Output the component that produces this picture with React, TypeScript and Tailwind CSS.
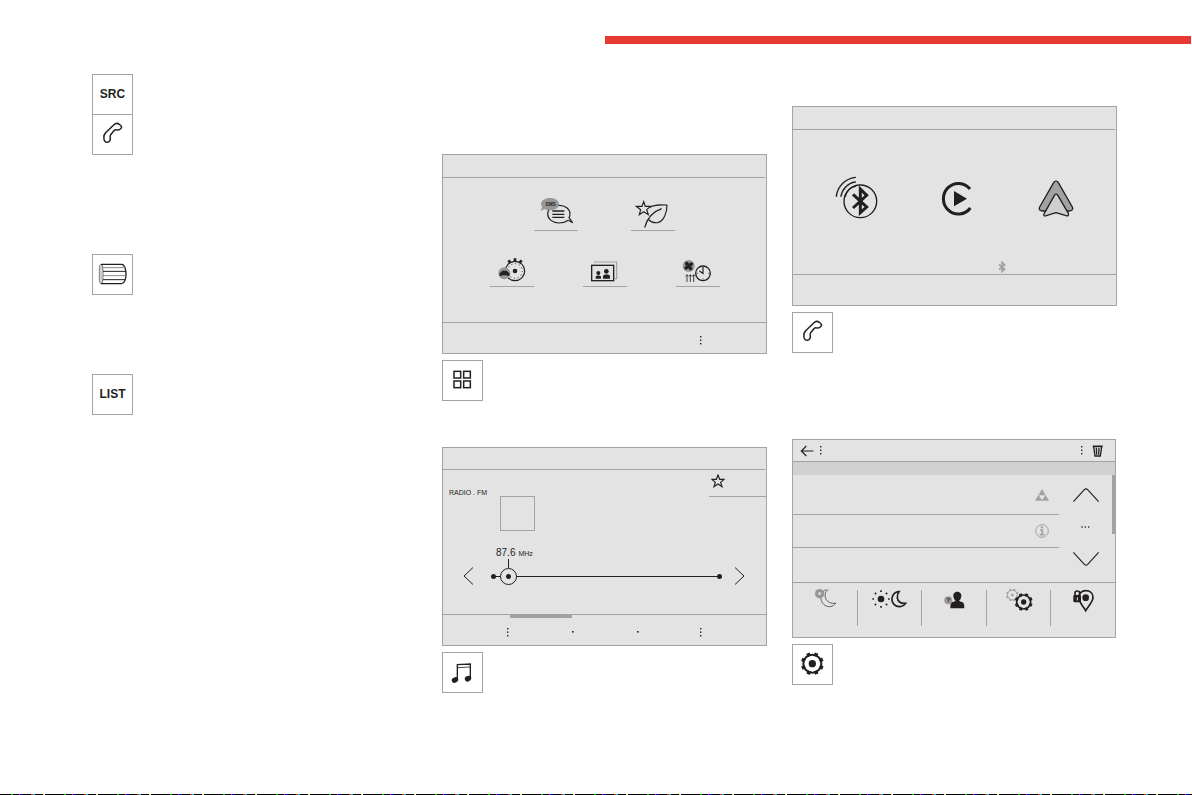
import React, { useState } from 'react';

const INK = '#231f20';
const GREY = '#a3a1a1';

function Gear({ cx, cy, r, tooth, color = INK, stroke = 5, dot = 8 }: {
  cx: number; cy: number; r: number; tooth: number; color?: string; stroke?: number; dot?: number;
}) {
  return (
    <g>
      <circle cx={cx} cy={cy} r={r} fill="none" stroke={color} strokeWidth={stroke} />
      {[22, 67, 112, 157, 202, 247, 292, 337].map(a => (
        <rect
          key={a}
          x={cx - tooth / 2}
          y={cy - r - tooth * 0.65}
          width={tooth}
          height={tooth}
          fill={color}
          stroke="none"
          transform={`rotate(${a} ${cx} ${cy})`}
        />
      ))}
      <circle cx={cx} cy={cy} r={dot} fill={color} stroke="none" />
    </g>
  );
}

function Tile({ label, children }: { label: string; children: React.ReactNode }) {
  return (
    <button
      type="button"
      aria-label={label}
      className="flex size-[41px] shrink-0 items-center justify-center border border-[#a3a3a3] bg-white"
    >
      {children}
    </button>
  );
}

function PhoneIcon() {
  return (
    <svg viewBox="0 0 117 117" className="size-[39px]" fill="none" stroke={INK} strokeWidth="4.5" strokeLinejoin="round">
      <path d="M33 66C31 63 34 58 38 53L62 30C67 25 74 24 79 28C86 32 87 37 84 40C81 44 76 46 71 45C68 43 65 45 62 48L53 59C50 63 51 65 52 69C53 75 49 82 43 82C36 82 31 75 33 66Z" />
    </svg>
  );
}

function KnobIcon() {
  return (
    <svg viewBox="0 0 117 117" className="size-[39px]" fill="none" stroke={INK} strokeWidth="3">
      <path d="M20 32L27 29V85L20 82Z" fill="#d0d0d0" stroke="none" />
      <path d="M24 28H86C94 28 99 42 99 57C99 73 94 86 86 86H24" strokeWidth="4" />
      <path d="M24 28C19 29 19 34 19 57C19 80 19 85 24 86" stroke="#777" />
      <path d="M27 29C31 38 31 76 27 85" strokeWidth="2" />
      <path d="M30 38H96M30 62H98" stroke="#8a8a8a" />
      <path d="M30 49H98M30 74H96" />
    </svg>
  );
}

function AppsIcon() {
  return (
    <svg viewBox="0 0 117 117" className="size-[39px]" fill="none" stroke={INK} strokeWidth="4.5">
      <rect x="33" y="31" width="20" height="20" />
      <rect x="62" y="31" width="20" height="20" />
      <rect x="33" y="60" width="20" height="20" />
      <rect x="62" y="60" width="20" height="20" />
    </svg>
  );
}

function MusicIcon() {
  return (
    <svg viewBox="0 0 117 117" className="size-[39px]" fill="none" stroke={INK} strokeWidth="4">
      <path d="M43 81V35L82 33V76" />
      <path d="M43 44L82 42" strokeWidth="2.5" />
      <ellipse cx="36" cy="81" rx="10" ry="8" fill={INK} stroke="none" transform="rotate(-30 36 81)" />
      <ellipse cx="75" cy="77" rx="10" ry="8" fill={INK} stroke="none" transform="rotate(-30 75 77)" />
    </svg>
  );
}

function SettingsIcon() {
  return (
    <svg viewBox="0 0 117 117" className="size-[39px]">
      <Gear cx={58} cy={56} r={27} tooth={11} stroke={6} dot={11} />
    </svg>
  );
}

function StarIcon() {
  return (
    <svg viewBox="0 0 42 42" className="size-[14px]" fill="none" stroke={INK} strokeWidth="3.5">
      <path d="M21 3L26 16L39 16L29 25L33 38L21 30L9 38L13 25L3 16L16 16Z" />
    </svg>
  );
}

function Dots() {
  return (
    <svg viewBox="0 0 4 9" className="h-[9px] w-1" fill={INK}>
      <rect x="1" y="0" width="1.4" height="1.4" />
      <rect x="1" y="3.5" width="1.4" height="1.4" />
      <rect x="1" y="7" width="1.4" height="1.4" />
    </svg>
  );
}

function Dot() {
  return (
    <svg viewBox="0 0 4 4" className="size-1" fill={INK}>
      <rect x="1" y="1" width="1.6" height="1.6" />
    </svg>
  );
}

function Panel({ children, className = '' }: { children: React.ReactNode; className?: string }) {
  return <section className={`border border-[#a3a3a3] bg-[#e3e3e3] ${className}`}>{children}</section>;
}

function TabBar({ marks, active = -1 }: { marks: string[]; active?: number }) {
  return (
    <nav className="grid h-[31px] grid-cols-5 border-t border-[#a3a3a3]">
      {marks.map((mark, i) => (
        <button key={i} type="button" aria-label={`Tab ${i + 1}`} className="relative flex items-center justify-end pt-1">
          {i === active && <span className="absolute top-0 right-0 left-0.5 h-[3px] bg-[#a3a1a1]" />}
          {mark === 'dots' && <span className="-mr-0.5"><Dots /></span>}
          {mark === 'dot' && <span className="-mr-[3px]"><Dot /></span>}
        </button>
      ))}
    </nav>
  );
}

function AppButton({ label, viewBox, children }: { label: string; viewBox: string; children: React.ReactNode }) {
  return (
    <button type="button" aria-label={label} className="border-b border-[#a3a3a3]">
      <svg viewBox={viewBox} className="block h-8 w-11" fill="none" stroke={INK} strokeWidth="3.5">
        {children}
      </svg>
    </button>
  );
}

function AppsPanel() {
  return (
    <Panel>
      <div className="mr-px h-[23px] border-b border-[#a3a3a3]" />
      <div className="flex flex-col gap-[23px] pt-5 pb-[35px]">
        <div className="flex justify-center gap-[53px]">
          <AppButton label="Messages" viewBox="297 159 132 96">
            <path d="M400 226C393 231 383 234 372 234C353 234 338 222 338 207C338 192 353 181 372 181C391 181 405 192 405 207C405 211 404 215 402 218L413 233Z" />
            <path d="M352 198H388M352 208H388M352 217H388" strokeWidth="4" />
            <path d="M345 159C360 159 372 167 372 178C372 189 360 196 345 196C339 196 333 195 329 192L316 198L322 186C319 184 318 181 318 178C318 167 330 159 345 159Z" fill="#989697" stroke="none" />
            <text x="347" y="183" textAnchor="middle" fontSize="14" fontWeight="700" fontFamily="Liberation Sans, sans-serif" fill={INK} stroke="none">SMS</text>
          </AppButton>
          <AppButton label="Eco driving" viewBox="588 159 132 96">
            <path d="M626 170L631 184L647 184L635 194L640 209L626 200L613 209L617 194L604 184L621 184Z" />
            <path d="M643 188C655 178 674 179 696 180C696 201 687 230 668 233C656 234 645 229 639 222" />
            <path d="M629 248C634 228 648 202 680 191" />
          </AppButton>
        </div>
        <div className="flex justify-center gap-[49px] pl-px">
          <AppButton label="Vehicle" viewBox="165 327 132 96">
            <circle cx="240" cy="378" r="29" />
            <circle cx="240" cy="378" r="22" strokeDasharray="3 8.5" strokeWidth="3" />
            <path d="M220 346L226 353M240 340V350M260 346L254 353" strokeWidth="8" />
            <circle cx="240" cy="378" r="7" fill={INK} stroke="none" />
            <circle cx="208" cy="385" r="18" fill="#989697" stroke="none" />
            <path d="M194 384L198 382L202 377H215L219 382L223 384V393H217V391H200V393H194Z" fill={INK} stroke="none" />
          </AppButton>
          <AppButton label="Photos" viewBox="447 327 132 96">
            <path d="M483 355V351H548V401H543" stroke={GREY} />
            <rect x="473" y="361" width="66" height="46" strokeWidth="4" />
            <g fill={INK} stroke="none">
              <circle cx="493" cy="384" r="6" />
              <path d="M485 401V396C485 390 501 390 501 396V401Z" />
              <circle cx="517" cy="379" r="7" />
              <path d="M507 401V394C507 387 528 387 528 394V401Z" />
            </g>
          </AppButton>
          <AppButton label="Climate programming" viewBox="723 327 132 96">
            <circle cx="761" cy="363" r="18" fill="#989697" stroke="none" />
            <path
              d="M761 363C750 362 747 354 754 350C761 351 763 357 761 363C762 352 770 349 774 356C773 363 767 365 761 363C772 364 775 372 768 376C761 375 759 369 761 363C760 374 752 377 748 370C749 363 755 361 761 363Z"
              fill={INK}
              strokeWidth="1"
            />
            <path d="M756 411V390M766 411V390M776 411V390M752 394L756 389L760 394M762 394L766 389L770 394M772 394L776 389L780 394" strokeWidth="2.5" />
            <circle cx="804" cy="385" r="22" strokeWidth="4" />
            <path d="M804 366V385L793 378" />
            <path d="M804 404V400M823 385H819M785 385H789" strokeWidth="2" />
          </AppButton>
        </div>
      </div>
      <TabBar marks={['', '', '', 'dots', '']} />
    </Panel>
  );
}

function RadioPanel() {
  const [frequency, setFrequency] = useState(87.6);

  return (
    <Panel>
      <div className="mr-px h-[22px] border-b border-[#a3a3a3]" />
      <div className="flex items-start">
        <p className="mt-[19px] w-[57px] pl-1.5 text-[7px] leading-[8px] whitespace-nowrap">RADIO . FM</p>
        <div className="mt-[26px] size-[35px] border border-[#a3a3a3]" />
        <button
          type="button"
          aria-label="Add to favourites"
          className="ml-auto flex h-[27px] w-[57px] items-start border-b border-[#a3a3a3] pt-1 pl-0.5"
        >
          <StarIcon />
        </button>
      </div>
      <div className="flex items-end pt-4 pr-[21px] pb-[29px] pl-5">
        <button type="button" aria-label="Previous station">
          <svg viewBox="0 0 11 18" className="block h-[18px] w-[11px]" fill="none" stroke={INK} strokeWidth="1">
            <path d="M10 0.5L1 9L10 17.5" />
          </svg>
        </button>
        <div className="ml-[17px] flex-1">
          <label htmlFor="tuner" className="flex h-3 items-baseline gap-[3px] pl-[5px] text-[10px] leading-3 whitespace-nowrap">
            {frequency.toFixed(1)} <span className="text-[7px]">MHz</span>
          </label>
          <div className="ml-[17px] h-[9px] w-px bg-[#231f20]" />
          <div className="flex h-[17px] items-center">
            <span className="-mr-[3px] size-[5px] rounded-full bg-[#231f20]" />
            <input
              id="tuner"
              type="range"
              min={86.9}
              max={108}
              step={0.1}
              value={frequency}
              onChange={e => setFrequency(Number(e.target.value))}
              className="h-[17px] min-w-0 flex-1 appearance-none bg-transparent [&::-webkit-slider-runnable-track]:h-px [&::-webkit-slider-runnable-track]:bg-[#231f20] [&::-webkit-slider-thumb]:-mt-2 [&::-webkit-slider-thumb]:size-[17px] [&::-webkit-slider-thumb]:appearance-none [&::-webkit-slider-thumb]:rounded-full [&::-webkit-slider-thumb]:border [&::-webkit-slider-thumb]:border-[#231f20] [&::-webkit-slider-thumb]:bg-[radial-gradient(circle,#231f20_2px,#e3e3e3_3px)]"
            />
            <span className="-ml-[3px] size-[5px] rounded-full bg-[#231f20]" />
          </div>
        </div>
        <button type="button" aria-label="Next station" className="ml-3">
          <svg viewBox="0 0 11 18" className="block h-[18px] w-[11px]" fill="none" stroke={INK} strokeWidth="1">
            <path d="M1 0.5L10 9L1 17.5" />
          </svg>
        </button>
      </div>
      <TabBar marks={['dots', 'dot', 'dot', 'dots', '']} active={1} />
    </Panel>
  );
}

function ConnectPanel() {
  return (
    <Panel>
      <div className="mr-px h-[23px] border-b border-[#a3a3a3]" />
      <div className="flex justify-center gap-14 pt-[45px] pl-[3px]">
        <button type="button" aria-label="Bluetooth">
          <svg viewBox="147 225 132 132" className="block size-11" fill="none" stroke={INK} strokeWidth="4">
            <circle cx="226" cy="304" r="49" />
            <path d="M154 289C157 260 180 236 211 232M168 289C171 268 188 249 211 246M181 289C185 274 195 262 211 259" strokeLinecap="round" />
            <path d="M204 283L245 321L226 338V267L245 286L204 324" strokeWidth="9" />
          </svg>
        </button>
        <button type="button" aria-label="CarPlay">
          <svg viewBox="447 225 132 132" className="block size-11" fill="none" stroke={INK}>
            <path d="M555 267A45 46 0 1 0 556 324" strokeWidth="9" />
            <path d="M507 273V319L546 296Z" fill={INK} stroke="none" />
          </svg>
        </button>
        <button type="button" aria-label="Android Auto">
          <svg viewBox="747 225 132 132" className="block size-11" stroke={INK} strokeWidth="4" strokeLinejoin="round">
            <path d="M806 248C809 242 817 242 820 248L862 321C866 328 860 333 852 333H773C765 333 760 328 764 321Z" fill="#a3a1a1" />
            <path d="M808 287C811 281 816 281 819 287L850 340C852 346 849 349 843 347L813 338L784 347C777 349 774 346 778 340Z" fill="#cfcfcf" />
          </svg>
        </button>
      </div>
      <div className="flex justify-center pt-[42px] pb-px pl-[94px]">
        <svg viewBox="0 0 24 36" className="h-3 w-2" fill="none" stroke={GREY} strokeWidth="5">
          <path d="M3 10L20 25L12 32V4L20 11L3 26" />
        </svg>
      </div>
      <div className="h-[31px] border-t border-[#a3a3a3]" />
    </Panel>
  );
}

function ShortcutIcon({ label, viewBox, children }: { label: string; viewBox: string; children: React.ReactNode }) {
  return (
    <button type="button" aria-label={label} className="flex flex-1 justify-center">
      <svg viewBox={viewBox} className="block h-7 w-11" fill="none" stroke={INK} strokeWidth="5">
        {children}
      </svg>
    </button>
  );
}

function Divider() {
  return <span className="mt-[3px] h-9 w-px bg-[#a3a3a3]" />;
}

function SettingsPanel() {
  return (
    <Panel className="mr-px">
      <div className="flex h-[22px] items-center border-b border-[#a3a3a3] pr-[11px] pl-[7px]">
        <button type="button" aria-label="Back">
          <svg viewBox="0 0 42 36" className="block h-3 w-[14px]" fill="none" stroke={INK} strokeWidth="3.5">
            <path d="M40 18H4M19 3L4 18L19 33" />
          </svg>
        </button>
        <span className="ml-[5px]"><Dots /></span>
        <span className="ml-auto"><Dots /></span>
        <button type="button" aria-label="Delete" className="ml-2">
          <svg viewBox="0 0 36 36" className="block size-3" fill="none" stroke={INK} strokeWidth="3">
            <path d="M2 4H32" strokeWidth="5" />
            <path d="M5 5L9 33H25L29 5M13 8L14 29M21 8L20 29" strokeWidth="4" />
          </svg>
        </button>
      </div>
      <div className="h-[13px] bg-[#d0d0d0]" />
      <div className="flex">
        <div className="flex-1">
          <div className="flex h-10 items-center justify-end border-b border-[#a3a3a3] pr-[10px]">
            <svg viewBox="0 0 42 36" className="h-3 w-[14px]" fill={GREY}>
              <path d="M21 0L42 35H0ZM11 19L21 34L31 19Z" fillRule="evenodd" />
            </svg>
          </div>
          <div className="flex h-[33px] items-center justify-end border-b border-[#a3a3a3] pr-[10px]">
            <svg viewBox="0 0 42 42" className="size-[14px]" fill="none" stroke={GREY} strokeWidth="3">
              <circle cx="21" cy="21" r="19" />
              <path d="M15 18H22V31M14 32H29" strokeWidth="5" />
              <circle cx="21" cy="10" r="3.5" fill={GREY} stroke="none" />
            </svg>
          </div>
        </div>
        <div className="flex w-[53px] flex-col items-center pt-[13px] pb-4">
          <button type="button" aria-label="Scroll up">
            <svg viewBox="0 0 78 42" className="block h-[14px] w-[26px]" fill="none" stroke={INK} strokeWidth="3.5">
              <path d="M1 41L34 5Q39 0 44 5L77 41" />
            </svg>
          </button>
          <svg viewBox="0 0 27 6" className="my-[24px] h-0.5 w-[9px]" fill={INK}>
            <rect x="1" y="1" width="4" height="4" />
            <rect x="11" y="1" width="4" height="4" />
            <rect x="21" y="1" width="4" height="4" />
          </svg>
          <button type="button" aria-label="Scroll down">
            <svg viewBox="0 0 78 42" className="block h-[14px] w-[26px]" fill="none" stroke={INK} strokeWidth="3.5">
              <path d="M1 1L34 37Q39 42 44 37L77 1" />
            </svg>
          </button>
        </div>
        <div className="h-[59px] w-[3px] bg-[#a3a1a1]" />
      </div>
      <div className="flex border-t border-[#a3a3a3] pt-1 pb-[22px] [&>span]:-mb-[11px]">
        <ShortcutIcon label="Turn off screen" viewBox="53 51 132 84">
          <path d="M124 59C104 63 101 91 116 104C128 114 145 111 151 99C137 103 123 95 120 82C118 73 120 65 129 59" strokeWidth="2" />
          <circle cx="103" cy="71" r="14" fill="#989697" stroke="none" />
          <circle cx="103" cy="71" r="4" fill="#e3e3e3" stroke="none" />
        </ShortcutIcon>
        <Divider />
        <ShortcutIcon label="Brightness" viewBox="247 51 132 84">
          <circle cx="289" cy="87" r="10" fill={INK} stroke="none" />
          {[0, 45, 90, 135, 180, 225, 270, 315].map(a => (
            <path key={a} d="M289 66V61" strokeWidth="5" transform={`rotate(${a} 289 87)`} />
          ))}
          <path d="M341 65C321 69 317 91 328 103C339 114 356 111 363 100C350 101 340 95 338 84C337 76 339 70 343 65Z" />
        </ShortcutIcon>
        <Divider />
        <ShortcutIcon label="Profiles" viewBox="441 51 132 84">
          <path d="M505 79C503 61 531 61 529 79C528 86 525 91 522 93L533 97C537 99 538 104 538 115H496C496 104 497 99 501 97L512 93C508 90 506 85 505 79Z" fill={INK} stroke="none" />
          <circle cx="490" cy="91" r="12" fill="#989697" stroke="none" />
          <text x="490" y="97" textAnchor="middle" fontSize="17" fontWeight="700" fontFamily="Liberation Sans, sans-serif" fill={INK} stroke="none">?</text>
        </ShortcutIcon>
        <Divider />
        <ShortcutIcon label="System configuration" viewBox="635 51 132 84">
          <Gear cx={681} cy={75} r={15} tooth={6} color={GREY} stroke={3} dot={4} />
          <circle cx="715" cy="96" r="22" fill="#e3e3e3" stroke="none" />
          <Gear cx={715} cy={96} r={21} tooth={9} stroke={5} dot={8} />
        </ShortcutIcon>
        <Divider />
        <ShortcutIcon label="Privacy" viewBox="829 51 132 84">
          <path d="M903 62C917 62 925 71 925 82C925 97 909 110 903 122C897 110 882 97 882 82C882 71 891 62 903 62Z" />
          <circle cx="903" cy="83" r="10" fill={INK} stroke="none" />
          <path d="M871 79V69C871 61 885 61 885 69V79" />
          <rect x="866" y="75" width="23" height="22" rx="4" fill={INK} stroke="none" />
          <path d="M878 82V91" stroke="#e3e3e3" strokeWidth="3" />
        </ShortcutIcon>
      </div>
    </Panel>
  );
}

export default function App() {
  return (
    <div className="flex min-h-screen flex-col bg-white font-['Liberation_Sans',Arial,sans-serif] text-[#231f20]">
      <header className="flex justify-end pt-9 pr-px">
        <div className="h-2 w-[586px] bg-[#e63932]" />
      </header>

      <main className="grid flex-1 grid-cols-3 gap-[25px] pr-[75px] pl-[92px]">
        <div className="flex flex-col items-start pt-[30px]">
          <Tile label="SRC"><span className="pb-0.5 text-xs font-bold">SRC</span></Tile>
          <div className="-mt-px flex"><Tile label="Phone"><PhoneIcon /></Tile></div>
          <div className="mt-[99px] flex"><Tile label="Rotary control"><KnobIcon /></Tile></div>
          <div className="mt-[79px] flex"><Tile label="LIST"><span className="pb-0.5 text-xs font-bold">LIST</span></Tile></div>
        </div>

        <div className="flex flex-col gap-[46px] pt-[110px]">
          <div className="flex flex-col gap-1.5">
            <AppsPanel />
            <Tile label="Applications"><AppsIcon /></Tile>
          </div>
          <div className="flex flex-col gap-1.5">
            <RadioPanel />
            <Tile label="Radio Media"><MusicIcon /></Tile>
          </div>
        </div>

        <div className="flex flex-col gap-[86px] pt-[62px]">
          <div className="flex flex-col gap-1.5">
            <ConnectPanel />
            <Tile label="Telephone"><PhoneIcon /></Tile>
          </div>
          <div className="flex flex-col gap-1.5">
            <SettingsPanel />
            <Tile label="Settings"><SettingsIcon /></Tile>
          </div>
        </div>
      </main>

      <footer className="h-px bg-black bg-[repeating-linear-gradient(90deg,#000_0_11px,#0c0_11px_13px,#000_13px_19px,#e0e_19px_20px,#00c_20px_23px,#000_23px_31px,#e22_31px_33px,#0cc_33px_35px,#000_35px_43px,#ee4_43px_44px,#fff_44px_45px,#000_45px_53px)]" />
    </div>
  );
}
